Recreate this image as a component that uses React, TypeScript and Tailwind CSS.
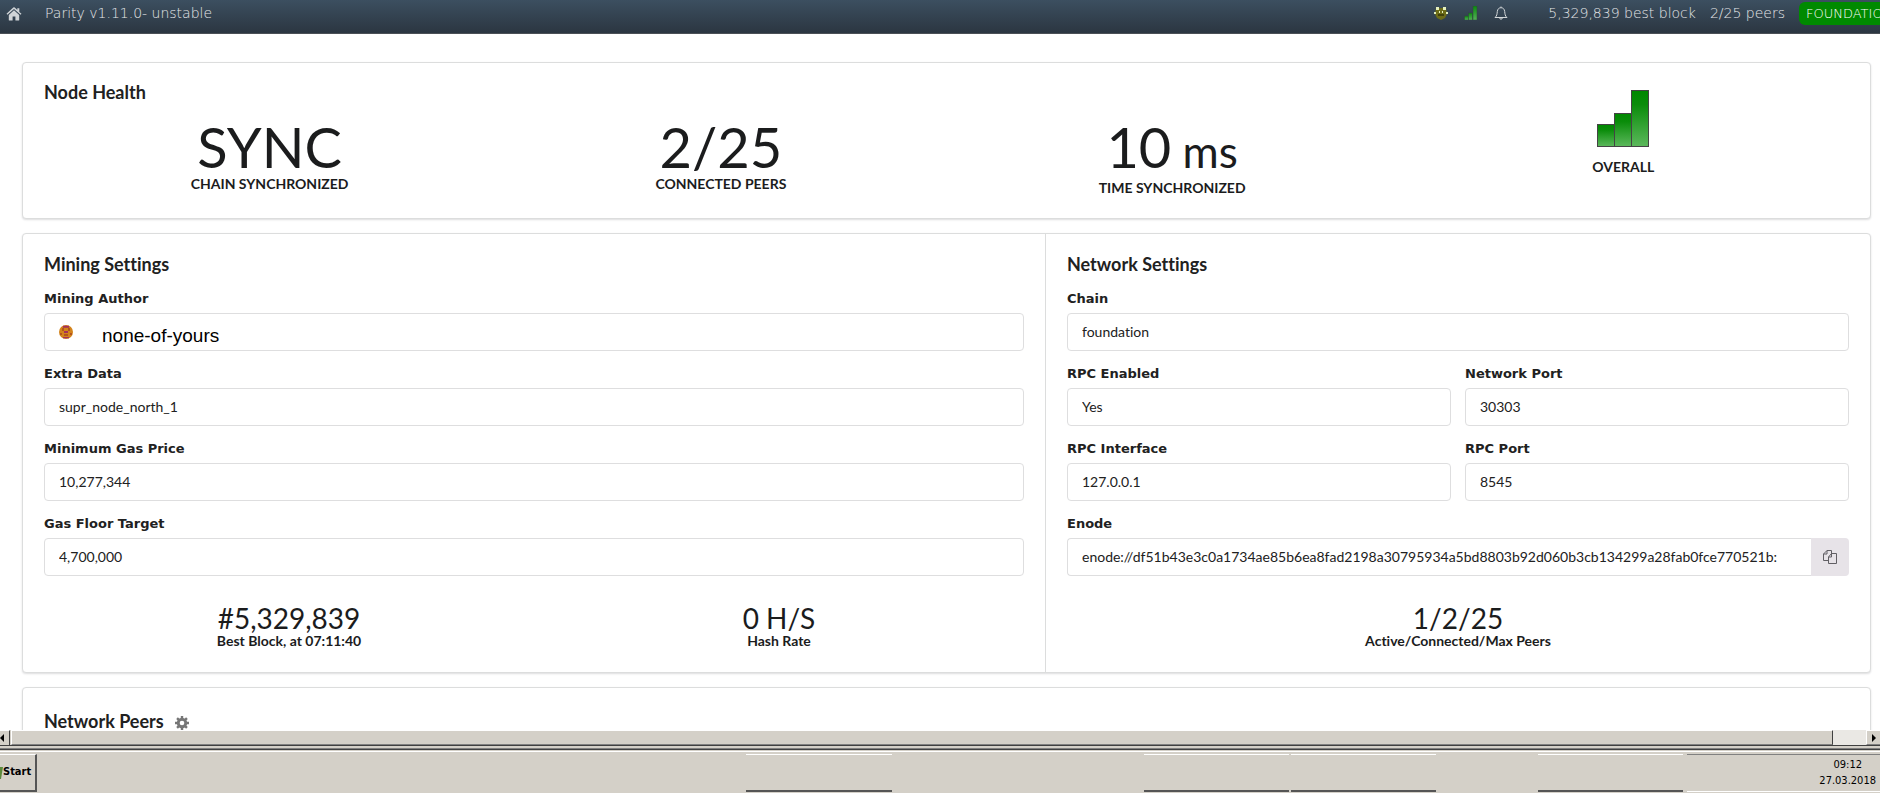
import React from "react";

type FieldProps = { id: string; label: string; value: string; className?: string };

const inputClass =
  "block h-[38px] w-full rounded border border-[#dededf] bg-white px-[14px] pb-[2px] text-sm text-[#212121] outline-none";
const labelClass = "mb-[5px] block h-[18px] font-['DejaVu_Sans',sans-serif] text-[13px] leading-[18px] font-bold text-[#212121]";
const headingClass = "text-lg leading-6 font-bold text-[#212121]";
const cardClass = "rounded border border-[#dcdddd] bg-white shadow-[0_1px_2px_0_rgba(34,36,38,0.15)]";

function Field({ id, label, value, className = "" }: FieldProps) {
  return (
    <div className={className}>
      <label htmlFor={id} className={labelClass}>{label}</label>
      <input id={id} readOnly value={value} className={inputClass} />
    </div>
  );
}

function SignalBars({ className, prefix }: { className: string; prefix: string }) {
  return (
    <svg className={className} viewBox="0 0 52 57" aria-hidden="true">
      <defs>
        <linearGradient id={prefix} x1="0" y1="0" x2="0" y2="1">
          <stop offset="0" stopColor="#008800" />
          <stop offset="0.25" stopColor="#0a8c0a" />
          <stop offset="1" stopColor="#5cb85c" />
        </linearGradient>
      </defs>
      <g fill={`url(#${prefix})`} stroke="#444" strokeWidth="1">
        <rect x="0.5" y="34.5" width="17" height="22" />
        <rect x="17.5" y="23.5" width="17" height="33" />
        <rect x="34.5" y="0.5" width="17" height="56" />
      </g>
    </svg>
  );
}

function NavBars() {
  return (
    <svg className="h-[14px] w-[14px]" viewBox="0 0 14 14" aria-hidden="true">
      <defs>
        <linearGradient id="nav-bars" x1="0" y1="0" x2="0" y2="1">
          <stop offset="0" stopColor="#0b8a0f" />
          <stop offset="1" stopColor="#55b058" />
        </linearGradient>
      </defs>
      <g fill="url(#nav-bars)" stroke="#2c4a3a" strokeWidth="0.5">
        <rect x="0.5" y="10" width="4" height="4" />
        <rect x="4.5" y="7" width="4" height="7" />
        <rect x="9" y="0" width="4" height="14" />
      </g>
    </svg>
  );
}

function BigStat({ value, label, unit }: { value: string; label: string; unit?: string }) {
  return (
    <div className="flex flex-col items-center text-[#1b1c1d]">
      <div className="text-[56px] leading-[56px]">
        {value}
        {unit && <span className="text-[44px]"> {unit}</span>}
      </div>
      <div className="text-sm leading-[18px] font-bold">{label}</div>
    </div>
  );
}

function SmallStat({ value, label }: { value: string; label: string }) {
  return (
    <div className="flex flex-1 flex-col items-center text-[#1b1c1d]">
      <div className="text-[28px] leading-7">{value}</div>
      <div className="text-sm leading-[18px] font-bold">{label}</div>
    </div>
  );
}

export default function App() {
  return (
    <div className="flex h-screen flex-col overflow-hidden bg-white font-['Lato',sans-serif] [font-variant-ligatures:none]">
      <header className="flex h-[34px] shrink-0 items-start overflow-hidden border-b border-[#4b5056] bg-gradient-to-b from-[#3c4f60] to-[#2b3641] font-['DejaVu_Sans',sans-serif] text-sm leading-[26px] font-extralight text-[#e4e6e8]">
        <a href="#home" aria-label="Home" className="flex h-7 w-[45px] items-center pl-[6px]">
          <svg className="h-4 w-4" viewBox="0 0 16 16" fill="#d0d4d7" aria-hidden="true">
            <path d="M8 4.3 2.8 8.9v5c0 .4.2.6.6.6h3.2V10.5h2.8v4h3.2c.4 0 .6-.2.6-.6v-5z" />
            <path d="M13.3 5.9V2.3h-2v1.600L8.7 1.6a1 1 0 0 0-1.400 0L.5 7.7l.9 1L8 2.9l6.600 5.800.9-1z" />
          </svg>
        </a>
        <span>Parity v1.11.0- unstable</span>
        <div className="ml-auto flex shrink-0">
          <div className="flex h-[26px] items-center gap-4 pr-[40px]">
            <svg className="h-[14px] w-[14px]" viewBox="0 0 14 14" aria-hidden="true">
              <path d="M2 2h10l1 6-2 4-4 2-4-2-2-4z" fill="#6d6c17" />
              <path d="M2 1h3v3H2zM9 1h3v3H9zM0 6h2v2H0zM12 6h2v2h-2zM5 5h1v2H5zM8 5h1v2H8z" fill="#e4efbd" />
              <path d="M4 8h6v2H4z" fill="#42420c" />
            </svg>
            <NavBars />
            <svg className="h-[14px] w-[14px]" viewBox="0 0 14 14" fill="none" stroke="#d4d8da" aria-hidden="true">
              <path d="M7 .5v1M1 11.5c2-1.600 2-3.500 2.300-6C3.600 3 5 1.700 7 1.700s3.400 1.300 3.700 3.800c.3 2.500.3 4.400 2.300 6zM5.700 12c.2 1.700 2.400 1.700 2.600 0" />
            </svg>
          </div>
          <span>5,329,839 best block</span>
          <span className="ml-[14px]">2/25 peers</span>
          <span className="mt-[2px] ml-[14px] h-[23px] w-[81px] overflow-hidden rounded-l-md bg-[#008a00] pl-[7px] text-[13px] leading-6 text-white">FOUNDATION</span>
        </div>
      </header>

      <main className="flex min-h-0 flex-1 flex-col gap-[14px] overflow-hidden pt-7 pr-[9px] pl-[22px]">
        <section className={`${cardClass} relative grid h-[157px] shrink-0 grid-cols-4 px-[21px] pt-[56px]`}>
          <h2 className={`${headingClass} absolute top-[17px] left-[21px]`}>Node Health</h2>
          <BigStat value="SYNC" label="CHAIN SYNCHRONIZED" />
          <BigStat value="2/25" label="CONNECTED PEERS" />
          <BigStat value="10" unit="ms" label="TIME SYNCHRONIZED" />
          <div className="-mt-[29px] flex flex-col items-center gap-[11px] text-[#1b1c1d]">
            <SignalBars className="h-[57px] w-[52px]" prefix="overall-bars" />
            <div className="text-sm leading-[18px] font-bold">OVERALL</div>
          </div>
        </section>

        <section className={`${cardClass} flex h-[440px] shrink-0`}>
          <div className="w-[1023px] shrink border-r border-[#dcdddd] px-[21px] pt-[18px]">
            <h2 className={`${headingClass} mb-[14px]`}>Mining Settings</h2>
            <div className="flex flex-col gap-[14px]">
              <div>
                <label htmlFor="author" className={labelClass}>Mining Author</label>
                <div className="flex h-[38px] items-center rounded border border-[#dededf] pl-[14px]">
                  <svg className="h-[14px] w-[14px] shrink-0" viewBox="0 0 14 14" aria-hidden="true">
                    <circle cx="7" cy="7" r="7" fill="#d3831b" />
                    <path d="M4 .7h6v2H4zM5 6h4v2H5zM4 12h6v1.300H4z" fill="#a3305a" />
                    <path d="M3 3h2v3H3zM9 3h2v3H9zM5 9h4v2H5zM1 8h2v2H1zM11 8h2v2h-2z" fill="#b4551c" />
                  </svg>
                  <input id="author" readOnly value="none-of-yours" className="ml-[29px] w-full bg-transparent pt-[7px] font-['Liberation_Sans',sans-serif] text-[19px] leading-6 text-black outline-none" />
                </div>
              </div>
              <Field id="extra" label="Extra Data" value="supr_node_north_1" />
              <Field id="gas" label="Minimum Gas Price" value="10,277,344" />
              <Field id="floor" label="Gas Floor Target" value="4,700,000" />
            </div>
            <div className="mt-7 flex">
              <SmallStat value="#5,329,839" label="Best Block, at 07:11:40" />
              <SmallStat value="0 H/S" label="Hash Rate" />
            </div>
          </div>

          <div className="min-w-0 flex-1 px-[21px] pt-[18px]">
            <h2 className={`${headingClass} mb-[14px]`}>Network Settings</h2>
            <div className="grid grid-cols-2 gap-[14px]">
              <Field id="chain" label="Chain" value="foundation" className="col-span-2" />
              <Field id="rpc" label="RPC Enabled" value="Yes" />
              <Field id="port" label="Network Port" value="30303" />
              <Field id="iface" label="RPC Interface" value="127.0.0.1" />
              <Field id="rpcport" label="RPC Port" value="8545" />
              <div className="col-span-2">
                <label htmlFor="enode" className={labelClass}>Enode</label>
                <div className="flex">
                  <div className="h-[38px] min-w-0 flex-1 rounded-l border border-r-0 border-[#dededf] pr-7 pl-[14px]">
                    <input id="enode" readOnly value="enode://df51b43e3c0a1734ae85b6ea8fad2198a30795934a5bd8803b92d060b3cb134299a28fab0fce770521b:" className="h-9 w-full bg-transparent pb-[2px] text-sm text-[#212121] outline-none" />
                  </div>
                  <button type="button" aria-label="Copy enode" className="flex h-[38px] w-[38px] items-center justify-center rounded-r bg-[#e7e3e8]">
                    <svg className="h-[14px] w-[14px]" viewBox="0 0 14 14" fill="none" stroke="#615f64" aria-hidden="true">
                      <path d="M5.500 10.500h-5V4L4 .5h4.500V4M4 .5V4H.5M8.500 3.500h5v10h-8V7zM8.500 3.500V7h-3" />
                    </svg>
                  </button>
                </div>
              </div>
            </div>
            <div className="mt-7 flex">
              <SmallStat value="1/2/25" label="Active/Connected/Max Peers" />
            </div>
          </div>
        </section>

        <section className={`${cardClass} h-40 shrink-0 px-[21px] pt-[21px]`}>
          <div className="flex items-center gap-[11px]">
            <h2 className={headingClass}>Network Peers</h2>
            <button type="button" aria-label="Peer settings" className="pt-1">
              <svg className="h-[14px] w-[14px]" viewBox="0 0 14 14" aria-hidden="true">
                <g fill="#767676">
                  <path d="M5.800 0h2.400v14H5.800zM0 5.800h14v2.400H0z" />
                  <path d="M5.800 0h2.400v14H5.800zM0 5.800h14v2.400H0z" transform="rotate(45 7 7)" />
                  <circle cx="7" cy="7" r="5.2" />
                </g>
                <circle cx="7" cy="7" r="2.3" fill="#fff" />
              </svg>
            </button>
          </div>
        </section>
      </main>

      <div className="flex h-4 shrink-0 border-b border-[#404040] bg-[#d4d0c8]">
        <button type="button" aria-label="Scroll left" className="flex w-[10px] items-center border-t border-r border-t-white border-r-[#404040]">
          <svg className="h-2 w-1" viewBox="0 0 4 8" aria-hidden="true"><path d="M4 0v8L0 4z" /></svg>
        </button>
        <div className="ml-px flex-1 border-t border-r border-b border-l border-t-white border-r-[#404040] border-b-[#808080] border-l-white" />
        <div className="w-[33px] bg-[#eae8e4]" />
        <button type="button" aria-label="Scroll right" className="flex w-[14px] items-center justify-center border-t border-b border-l border-t-white border-b-[#808080] border-l-white">
          <svg className="h-2 w-1" viewBox="0 0 4 8" aria-hidden="true"><path d="M0 0v8l4-4z" /></svg>
        </button>
      </div>

      <footer className="shrink-0 bg-[#d4d0c8] pt-[2px]">
        <div className="h-[2px] border-t border-b border-t-[#808080] border-b-[#404040]" />
        <div className="h-px bg-[#d4d0c8]" />
        <div className="h-px bg-white" />
        <div className="flex h-[41px] pt-[2px] font-['DejaVu_Sans_Condensed','DejaVu_Sans',sans-serif] text-[11px] text-black">
          <button type="button" className="flex h-[38px] w-[37px] items-center border-t border-r-2 border-b-2 border-t-white border-r-[#555] border-b-[#555] font-bold">
            <svg className="h-3 w-[3px] shrink-0" viewBox="0 0 3 12" aria-hidden="true"><path d="M0 0h3L1 12H0z" fill="#5c8a3c" /></svg>
            Start
          </button>
          <div className="ml-[709px] h-[38px] w-[146px] border-t border-b-2 border-t-white border-b-[#555]" />
          <div className="ml-auto flex h-[38px] gap-[2px]">
            <div className="w-[145px] border-t border-b-2 border-t-white border-b-[#555]" />
            <div className="mr-[100px] w-[145px] border-t border-b-2 border-t-white border-b-[#555]" />
            <div className="mr-[2px] w-[145px] border-t border-b-2 border-t-white border-b-[#555]" />
            <div className="flex w-[193px] flex-col items-end border-t border-b border-t-[#808080] border-b-white pt-[2px] pr-1 leading-4">
              <span className="pr-[14px]">09:12</span>
              <span>27.03.2018</span>
            </div>
          </div>
        </div>
      </footer>
    </div>
  );
}
